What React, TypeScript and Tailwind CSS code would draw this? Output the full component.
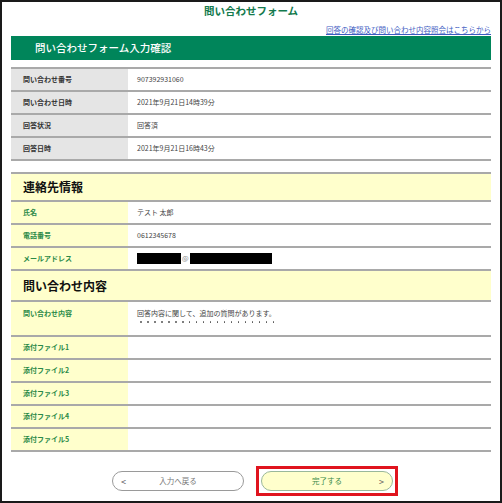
import React from 'react';

const infoRows = [
  { label: '問い合わせ番号', value: '907392931060' },
  { label: '問い合わせ日時', value: '2021年9月21日14時39分' },
  { label: '回答状況', value: '回答済' },
  { label: '回答日時', value: '2021年9月21日16時43分' },
];

const files = ['添付ファイル1', '添付ファイル2', '添付ファイル3', '添付ファイル4', '添付ファイル5'];

function GrayRow({ label, value }: { label: string; value: string }) {
  return (
    <div className="flex h-[23px] border-b-2 border-[#a9a9a9]">
      <div className="w-[117px] bg-[#e5e5e5] pl-[12px] flex items-center text-[7px] font-bold text-[#333]">
        {label}
      </div>
      <div className="flex-1 pl-[9px] flex items-center text-[7px] text-[#444]">{value}</div>
    </div>
  );
}

function YellowRow({ label, children, tall }: { label: string; children?: React.ReactNode; tall?: boolean }) {
  return (
    <div className={`flex border-b-2 border-[#a9a9a9] ${tall ? 'h-[35px]' : 'h-[23px]'}`}>
      <div
        className={`w-[117px] bg-[#ffffcc] pl-[12px] flex text-[7px] font-bold text-[#2b8a48] ${
          tall ? 'items-start pt-[6px]' : 'items-center'
        }`}
      >
        {label}
      </div>
      <div className={`flex-1 pl-[9px] flex text-[7px] text-[#444] ${tall ? 'items-start pt-[6px]' : 'items-center'}`}>
        {children}
      </div>
    </div>
  );
}

export default function App() {
  return (
    <div className="w-[502px] h-[503px] border-2 border-[#1a1a1a] bg-white px-[9px] font-['Noto_Sans_CJK_JP','Noto_Sans',sans-serif]">
      <div className="h-[18px] flex items-center justify-center text-[10.5px] font-bold text-[#137a4d]">
        問い合わせフォーム
      </div>
      <div className="h-[16px] flex items-end justify-end pb-[1px] text-[7.5px] leading-[10px]">
        <a className="text-[#3c5bbf] underline">回答の確認及び問い合わせ内容照会はこちらから</a>
      </div>
      <div className="h-[24px] bg-[#00855a] flex items-center pl-[24px] text-[10.5px] font-medium text-white">
        問い合わせフォーム入力確認
      </div>

      <div className="mt-[7px] border-t-2 border-[#a9a9a9]">
        {infoRows.map((r) => (
          <GrayRow key={r.label} label={r.label} value={r.value} />
        ))}
      </div>

      <div className="mt-[11px]">
        <div className="h-[30px] bg-[#ffffcc] border-t-2 border-b-2 border-[#a9a9a9] flex items-center pl-[12px] text-[12px] font-bold text-[#111]">
          連絡先情報
        </div>
        <YellowRow label="氏名">テスト 太郎</YellowRow>
        <YellowRow label="電話番号">0612345678</YellowRow>
        <YellowRow label="メールアドレス">
          <span className="flex items-center">
            <span className="w-[44px] h-[11px] bg-black" />
            <span className="text-[#888] px-[1px]">@</span>
            <span className="w-[82px] h-[11px] bg-black" />
          </span>
        </YellowRow>
        <div className="h-[31px] bg-[#ffffcc] border-b-2 border-[#a9a9a9] flex items-center pl-[12px] text-[12px] font-bold text-[#111]">
          問い合わせ内容
        </div>
        <YellowRow label="問い合わせ内容" tall>
          <div className="flex flex-col leading-[11px]">
            <span>回答内容に関して、追加の質問があります。</span>
            <span className="flex gap-[5.4px] pt-[2px] pl-[3px]">
              {Array.from({ length: 20 }).map((_, i) => (
                <span key={i} className="w-[1.6px] h-[1.6px] rounded-full bg-[#555]" />
              ))}
            </span>
          </div>
        </YellowRow>
        {files.map((f) => (
          <YellowRow key={f} label={f} />
        ))}
      </div>

      <div className="mt-[14px] flex items-center pl-[101px] gap-[12px]">
        <button className="w-[132px] h-[20px] rounded-full border border-[#9a9a9a] bg-white relative flex items-center justify-center text-[7.5px] text-[#777]">
          <span className="absolute left-[8px] text-[9px] text-[#555] leading-none">&lt;</span>
          入力へ戻る
        </button>
        <div className="border-[3px] border-[#e0141e] p-[2px]">
          <button className="w-[132px] h-[20px] rounded-full border border-[#9ab89a] bg-[#ffffcc] relative flex items-center justify-center text-[7.5px] text-[#3a8a4a]">
            完了する
            <span className="absolute right-[8px] text-[9px] text-[#555] leading-none">&gt;</span>
          </button>
        </div>
      </div>
    </div>
  );
}
